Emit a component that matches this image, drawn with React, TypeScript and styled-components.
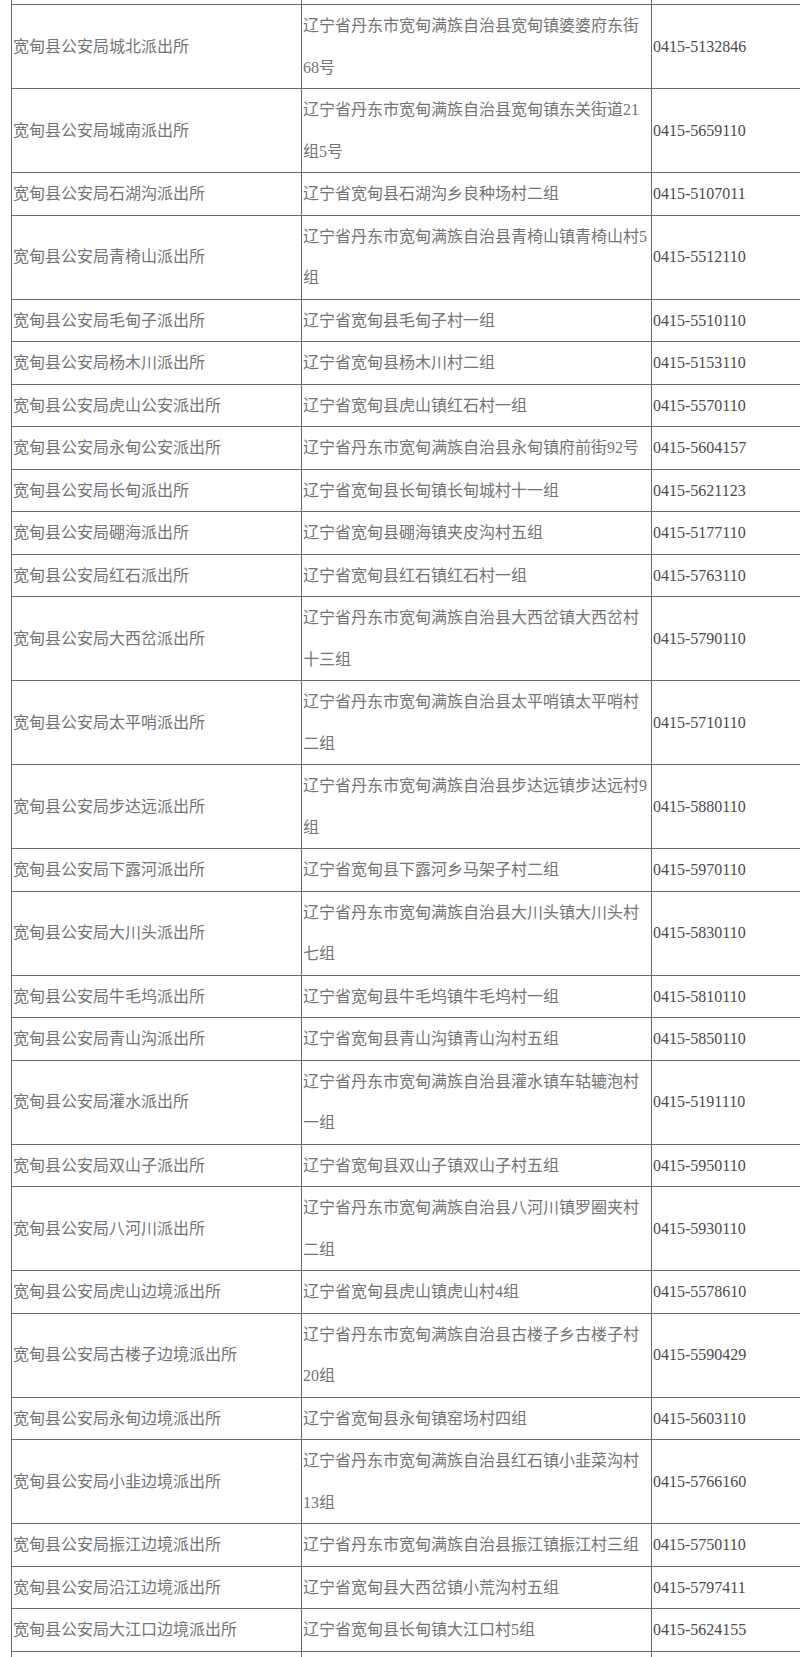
import styled, { createGlobalStyle } from "styled-components";

const GlobalStyle = createGlobalStyle`
  html, body {
    margin: 0;
    padding: 0;
    background: #fff;
    overflow: hidden;
  }
`;

type Station = {
  name: string;
  address: string;
  phone: string;
};

const stations: Station[] = [
  { name: "宽甸县公安局城北派出所", address: "辽宁省丹东市宽甸满族自治县宽甸镇婆婆府东街68号", phone: "0415-5132846" },
  { name: "宽甸县公安局城南派出所", address: "辽宁省丹东市宽甸满族自治县宽甸镇东关街道21组5号", phone: "0415-5659110" },
  { name: "宽甸县公安局石湖沟派出所", address: "辽宁省宽甸县石湖沟乡良种场村二组", phone: "0415-5107011" },
  { name: "宽甸县公安局青椅山派出所", address: "辽宁省丹东市宽甸满族自治县青椅山镇青椅山村5组", phone: "0415-5512110" },
  { name: "宽甸县公安局毛甸子派出所", address: "辽宁省宽甸县毛甸子村一组", phone: "0415-5510110" },
  { name: "宽甸县公安局杨木川派出所", address: "辽宁省宽甸县杨木川村二组", phone: "0415-5153110" },
  { name: "宽甸县公安局虎山公安派出所", address: "辽宁省宽甸县虎山镇红石村一组", phone: "0415-5570110" },
  { name: "宽甸县公安局永甸公安派出所", address: "辽宁省丹东市宽甸满族自治县永甸镇府前街92号", phone: "0415-5604157" },
  { name: "宽甸县公安局长甸派出所", address: "辽宁省宽甸县长甸镇长甸城村十一组", phone: "0415-5621123" },
  { name: "宽甸县公安局硼海派出所", address: "辽宁省宽甸县硼海镇夹皮沟村五组", phone: "0415-5177110" },
  { name: "宽甸县公安局红石派出所", address: "辽宁省宽甸县红石镇红石村一组", phone: "0415-5763110" },
  { name: "宽甸县公安局大西岔派出所", address: "辽宁省丹东市宽甸满族自治县大西岔镇大西岔村十三组", phone: "0415-5790110" },
  { name: "宽甸县公安局太平哨派出所", address: "辽宁省丹东市宽甸满族自治县太平哨镇太平哨村二组", phone: "0415-5710110" },
  { name: "宽甸县公安局步达远派出所", address: "辽宁省丹东市宽甸满族自治县步达远镇步达远村9组", phone: "0415-5880110" },
  { name: "宽甸县公安局下露河派出所", address: "辽宁省宽甸县下露河乡马架子村二组", phone: "0415-5970110" },
  { name: "宽甸县公安局大川头派出所", address: "辽宁省丹东市宽甸满族自治县大川头镇大川头村七组", phone: "0415-5830110" },
  { name: "宽甸县公安局牛毛坞派出所", address: "辽宁省宽甸县牛毛坞镇牛毛坞村一组", phone: "0415-5810110" },
  { name: "宽甸县公安局青山沟派出所", address: "辽宁省宽甸县青山沟镇青山沟村五组", phone: "0415-5850110" },
  { name: "宽甸县公安局灌水派出所", address: "辽宁省丹东市宽甸满族自治县灌水镇车轱辘泡村一组", phone: "0415-5191110" },
  { name: "宽甸县公安局双山子派出所", address: "辽宁省宽甸县双山子镇双山子村五组", phone: "0415-5950110" },
  { name: "宽甸县公安局八河川派出所", address: "辽宁省丹东市宽甸满族自治县八河川镇罗圈夹村二组", phone: "0415-5930110" },
  { name: "宽甸县公安局虎山边境派出所", address: "辽宁省宽甸县虎山镇虎山村4组", phone: "0415-5578610" },
  { name: "宽甸县公安局古楼子边境派出所", address: "辽宁省丹东市宽甸满族自治县古楼子乡古楼子村20组", phone: "0415-5590429" },
  { name: "宽甸县公安局永甸边境派出所", address: "辽宁省宽甸县永甸镇窑场村四组", phone: "0415-5603110" },
  { name: "宽甸县公安局小韭边境派出所", address: "辽宁省丹东市宽甸满族自治县红石镇小韭菜沟村13组", phone: "0415-5766160" },
  { name: "宽甸县公安局振江边境派出所", address: "辽宁省丹东市宽甸满族自治县振江镇振江村三组", phone: "0415-5750110" },
  { name: "宽甸县公安局沿江边境派出所", address: "辽宁省宽甸县大西岔镇小荒沟村五组", phone: "0415-5797411" },
  { name: "宽甸县公安局大江口边境派出所", address: "辽宁省宽甸县长甸镇大江口村5组", phone: "0415-5624155" },
];

export default function App() {
  return (
    <>
      <GlobalStyle />
      <Page>
        <Table>
          <colgroup>
            <col style={{ width: 290 }} />
            <col style={{ width: 350 }} />
            <col style={{ width: 200 }} />
          </colgroup>
          <tbody>
            {/* tail of the row above, cut off by the screenshot */}
            <EdgeRow $edge="top">
              <td />
              <td />
              <td />
            </EdgeRow>
            {stations.map((s) => (
              <tr key={s.name}>
                <Cell>{s.name}</Cell>
                <Cell>{s.address}</Cell>
                <Cell $phone>{s.phone}</Cell>
              </tr>
            ))}
            <EdgeRow $edge="bottom">
              <td />
              <td />
              <td />
            </EdgeRow>
          </tbody>
        </Table>
      </Page>
    </>
  );
}

const Page = styled.div`
  box-sizing: border-box;
  padding-left: 11px;
  width: 800px;
  height: 1657px;
  overflow: hidden;
`;

const Table = styled.table`
  border-collapse: collapse;
  table-layout: fixed;
  width: 840px;
  font-family: "Liberation Serif", "Noto Sans CJK SC", serif;
  font-size: 16px;
`;

const Cell = styled.td<{ $phone?: boolean }>`
  border: 1px solid #6b6b6b;
  padding: 0 1px;
  line-height: 41.5px;
  vertical-align: middle;
  color: ${(p) => (p.$phone ? "#4a4a4a" : "#747474")};
  word-break: normal;
`;

const EdgeRow = styled.tr<{ $edge: "top" | "bottom" }>`
  td {
    height: ${(p) => (p.$edge === "top" ? "4px" : "8px")};
    padding: 0;
    line-height: 0;
    font-size: 0;
    border-left: 1px solid #6b6b6b;
    border-right: 1px solid #6b6b6b;
    border-top: ${(p) => (p.$edge === "top" ? "none" : "1px solid #6b6b6b")};
    border-bottom: ${(p) => (p.$edge === "bottom" ? "none" : "1px solid #6b6b6b")};
  }
`;
